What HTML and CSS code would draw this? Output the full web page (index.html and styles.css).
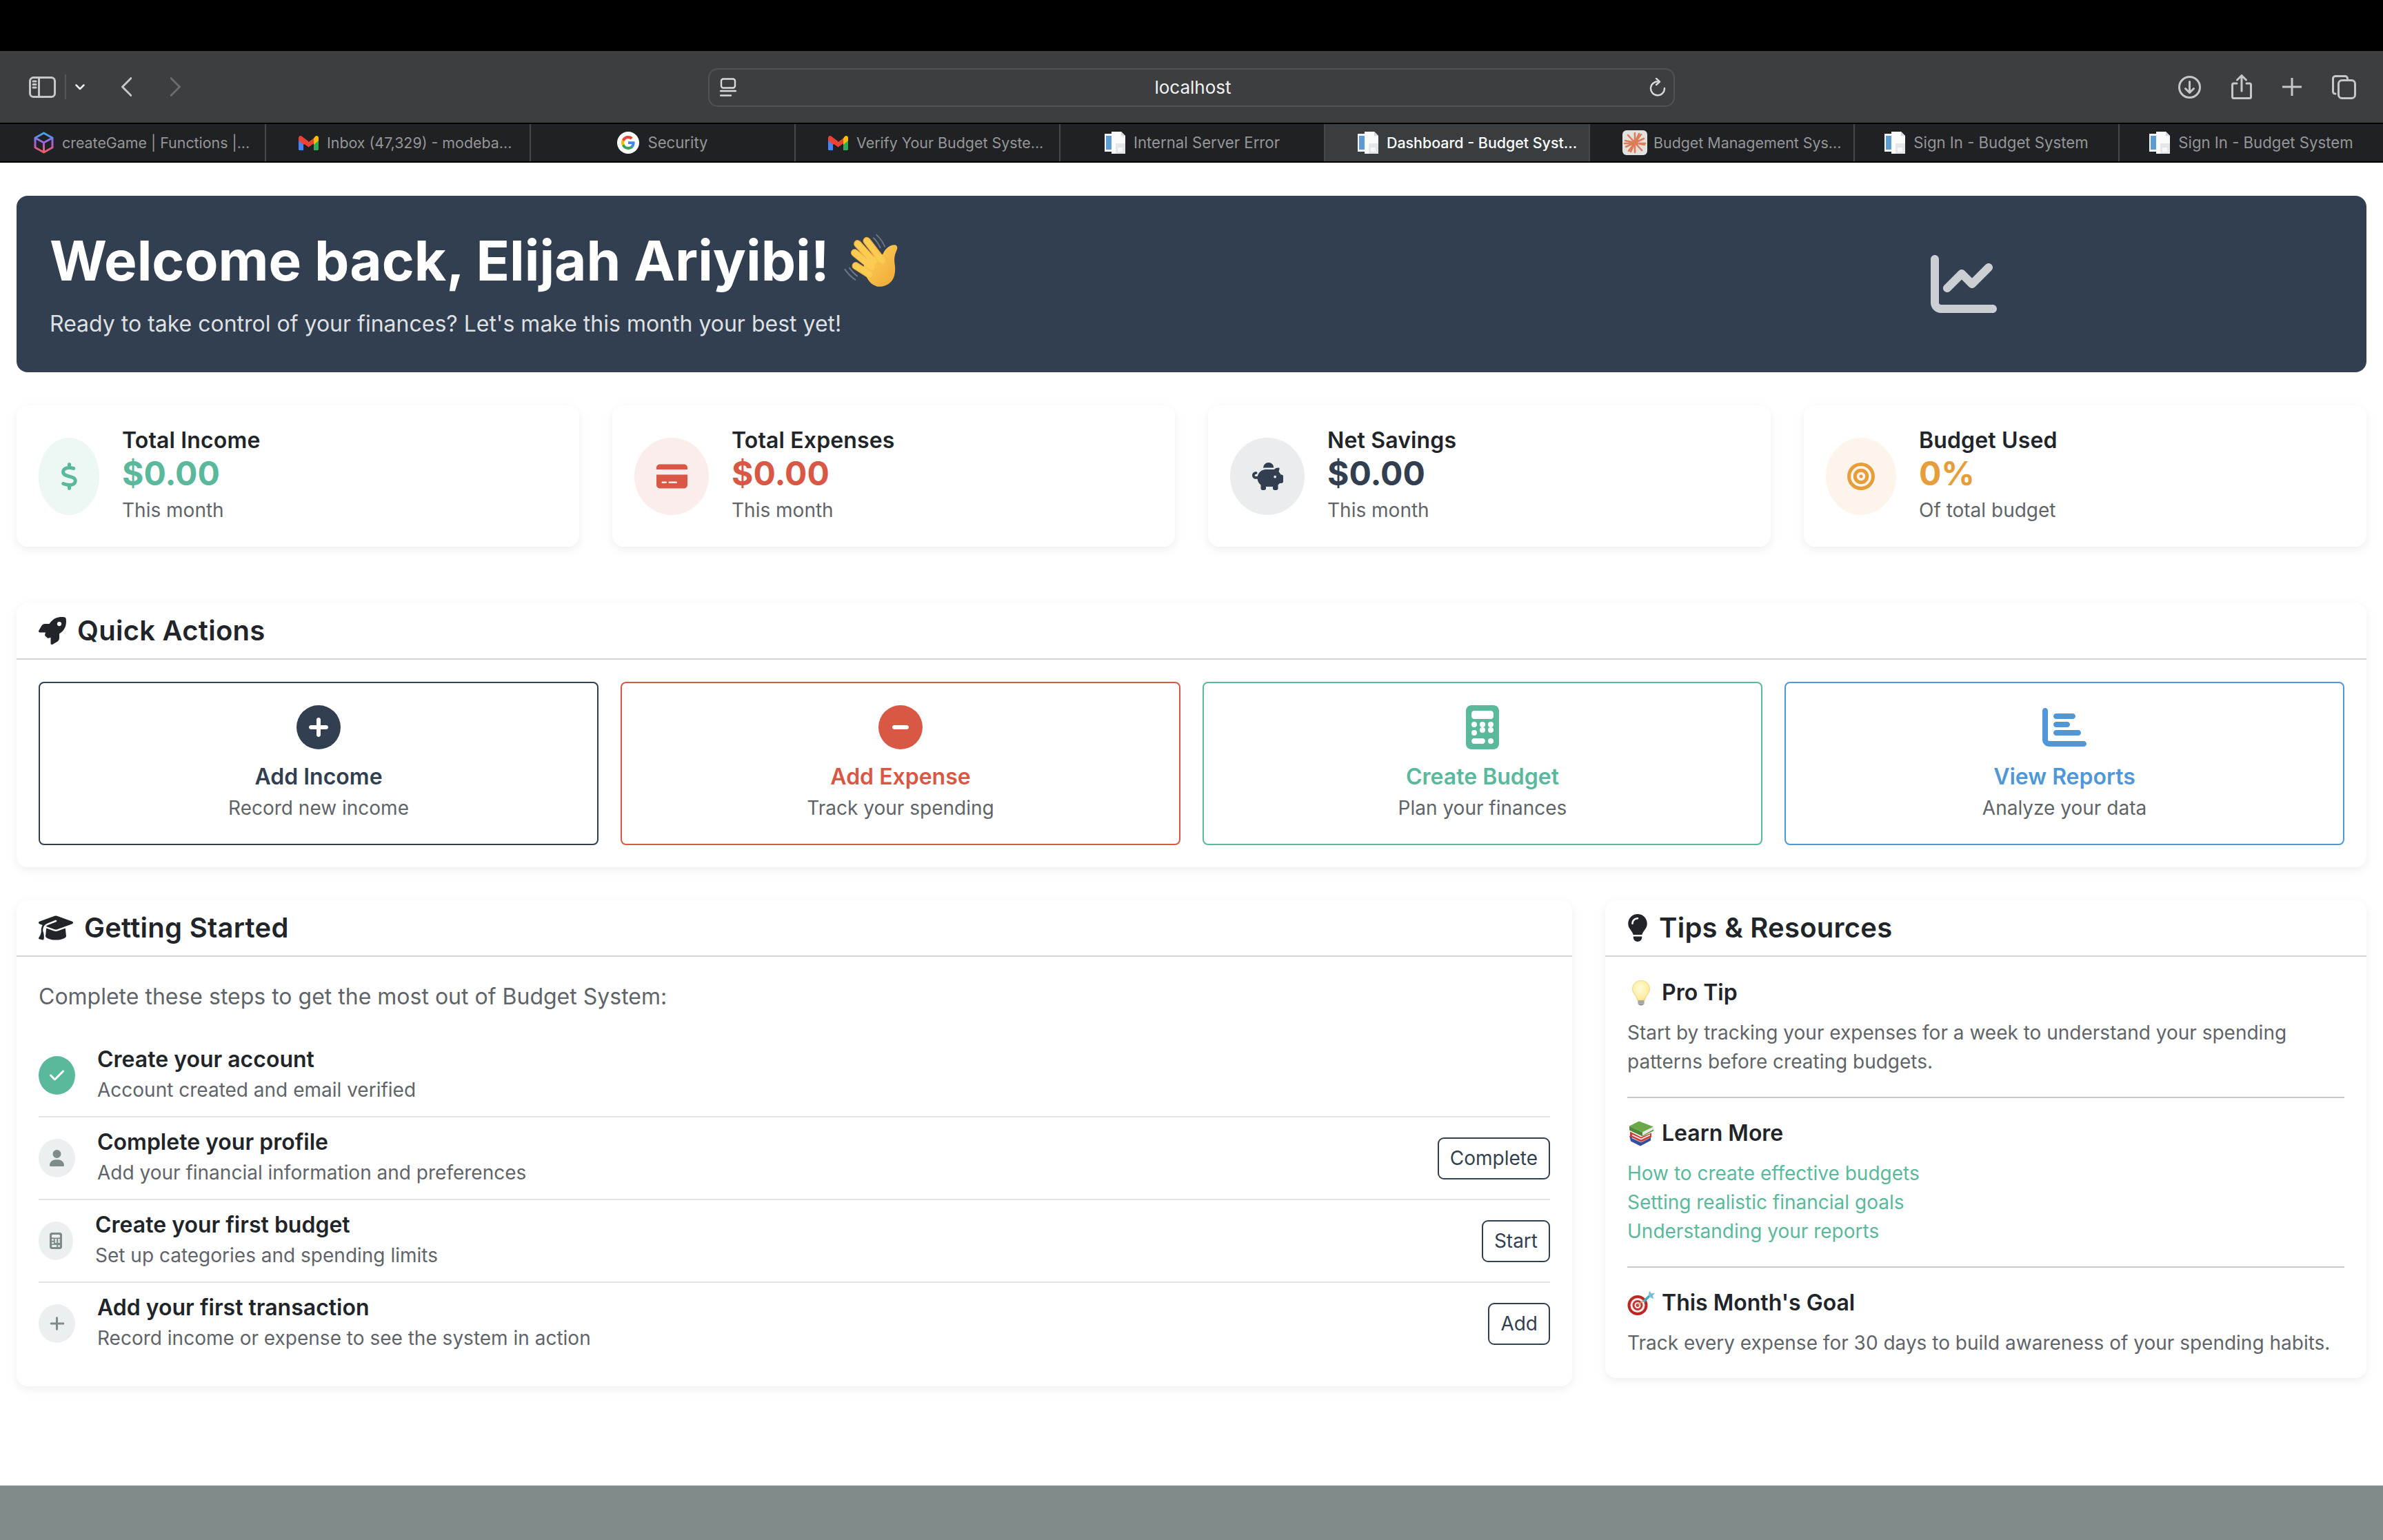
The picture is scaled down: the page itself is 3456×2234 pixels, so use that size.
FILE: index.html
```html
<!DOCTYPE html>
<html lang="en">
<head>
  <meta charset="UTF-8">
  <title>Dashboard - Budget System</title>
  <link rel="stylesheet" href="styles.css">
</head>
<body>
  <svg class="sprite" xmlns="http://www.w3.org/2000/svg">
    <defs>
      <linearGradient id="cubeGrad" x1="0" y1="0" x2="0" y2="1">
        <stop offset="0" stop-color="#3fa9e8"/>
        <stop offset="0.5" stop-color="#a45de0"/>
        <stop offset="1" stop-color="#f0605a"/>
      </linearGradient>
      <linearGradient id="palmGrad" x1="0" y1="0" x2="1" y2="1">
        <stop offset="0" stop-color="#fcd45c"/>
        <stop offset="1" stop-color="#f0a735"/>
      </linearGradient>
      <radialGradient id="bulbGrad" cx="0.45" cy="0.4" r="0.7">
        <stop offset="0" stop-color="#fffbdc"/>
        <stop offset="0.7" stop-color="#fbeea0"/>
        <stop offset="1" stop-color="#eccd62"/>
      </radialGradient>
    </defs>
    <symbol id="i-chart-line" viewBox="0 0 512 512"><path d="M64 64c0-17.7-14.3-32-32-32S0 46.3 0 64V400c0 44.2 35.8 80 80 80H480c17.7 0 32-14.3 32-32s-14.3-32-32-32H80c-8.8 0-16-7.2-16-16V64zm406.6 86.6c12.5-12.5 12.5-32.8 0-45.3s-32.8-12.5-45.3 0L320 210.7l-57.4-57.4c-12.5-12.5-32.8-12.5-45.3 0l-112 112c-12.5 12.5-12.5 32.8 0 45.3s32.8 12.5 45.3 0L240 221.3l57.4 57.4c12.5 12.5 32.8 12.5 45.3 0l128-128z"/></symbol>
    <symbol id="i-dollar" viewBox="0 0 320 512"><path d="M160 0c17.7 0 32 14.3 32 32V67.7c1.6 .2 3.1 .4 4.7 .7c.4 .1 .7 .1 1.1 .2l48 8.8c17.4 3.2 28.9 19.9 25.7 37.2s-19.9 28.9-37.2 25.7l-47.5-8.7c-31.3-4.6-58.9-1.5-78.3 6.2s-27.2 18.3-29 28.1c-2 10.7-.5 16.7 1.2 20.4c1.8 3.9 5.5 8.3 12.8 13.2c16.3 10.7 41.3 17.7 73.7 26.3l2.9 .8c28.6 7.6 63.6 16.8 89.6 33.8c14.2 9.3 27.6 21.9 35.9 39.5c8.5 17.9 10.3 37.9 6.4 59.2c-6.9 38-33.1 63.4-65.6 76.7c-13.7 5.6-28.6 9.2-44.4 11V480c0 17.7-14.3 32-32 32s-32-14.3-32-32V445.1c-.4-.1-.9-.1-1.3-.2l-.2 0 0 0c-24.4-3.8-64.5-14.3-91.5-26.3c-16.1-7.2-23.4-26.1-16.2-42.2s26.1-23.4 42.2-16.2c20.9 9.3 55.3 18.5 75.2 21.6c31.9 4.7 58.2 2 76-5.3c16.9-6.9 24.6-16.9 26.8-28.9c1.9-10.6 .4-16.7-1.3-20.4c-1.9-4-5.6-8.4-13-13.3c-16.4-10.7-41.5-17.7-74-26.3l-2.8-.7 0 0C119.4 279.3 84.4 270 58.4 253c-14.2-9.3-27.5-22-35.8-39.6c-8.4-17.9-10.1-37.9-6.1-59.2C23.7 116 52.3 91.2 84.8 78.3c13.3-5.3 27.9-8.9 43.2-11V32c0-17.7 14.3-32 32-32z"/></symbol>
    <symbol id="i-card" viewBox="0 0 576 512"><path d="M64 32C28.7 32 0 60.7 0 96v32H576V96c0-35.3-28.7-64-64-64H64zM576 224H0V416c0 35.3 28.7 64 64 64H512c35.3 0 64-28.7 64-64V224zM112 352h64c8.8 0 16 7.2 16 16s-7.2 16-16 16H112c-8.8 0-16-7.2-16-16s7.2-16 16-16zm112 16c0-8.8 7.2-16 16-16H368c8.8 0 16 7.2 16 16s-7.2 16-16 16H240c-8.8 0-16-7.2-16-16z"/></symbol>
    <symbol id="i-piggy" viewBox="0 0 576 512"><path d="M400 96l0 .7c-5.3-.4-10.6-.7-16-.7H256c-16.5 0-32.5 2.1-47.8 6c-.1-2-.2-4-.2-6c0-53 43-96 96-96s96 43 96 96zm-16 32c3.5 0 7 .1 10.4 .3c4.2 .3 8.4 .7 12.6 1.3C424.6 109.1 450.8 96 480 96h11.5c10.4 0 18 9.8 15.5 19.9l-13.8 55.2c15.8 14.8 28.7 32.8 37.5 52.9H544c17.7 0 32 14.3 32 32v96c0 17.7-14.3 32-32 32H512c-9.1 12.1-19.9 22.9-32 32v64c0 17.7-14.3 32-32 32H416c-17.7 0-32-14.3-32-32V448H256v32c0 17.7-14.3 32-32 32H192c-17.7 0-32-14.3-32-32V416c-34.9-26.2-58.7-66.3-63.2-112H68c-37.6 0-68-30.4-68-68s30.4-68 68-68h4c13.3 0 24 10.7 24 24s-10.7 24-24 24H68c-11 0-20 9-20 20s9 20 20 20H99.2c12.1-59.8 57.7-107.5 116.3-122.8c12.9-3.4 26.5-5.2 40.5-5.2H384zm64 136a24 24 0 1 0 -48 0 24 24 0 1 0 48 0z"/></symbol>
    <symbol id="i-bullseye" viewBox="0 0 512 512"><path d="M448 256A192 192 0 1 0 64 256a192 192 0 1 0 384 0zM0 256a256 256 0 1 1 512 0A256 256 0 1 1 0 256zm256 80a80 80 0 1 0 0-160 80 80 0 1 0 0 160zm0-224a144 144 0 1 1 0 288 144 144 0 1 1 0-288zM224 256a32 32 0 1 1 64 0 32 32 0 1 1 -64 0z"/></symbol>
    <symbol id="i-rocket" viewBox="0 0 512 512"><path d="M156.6 384.9L125.7 354c-8.5-8.5-11.5-20.8-7.7-32.2c3-8.9 7-20.5 11.8-33.8L24 288c-8.6 0-16.6-4.6-20.9-12.1s-4.2-16.7 .2-24.1l52.5-88.5c13-21.9 36.5-35.3 61.9-35.3l82.3 0c2.4-4 4.8-7.7 7.2-11.3C289.1-4.1 411.1-8.1 483.9 5.3c11.6 2.1 20.6 11.2 22.8 22.8c13.4 72.9 9.3 194.8-111.4 276.7c-3.5 2.4-7.3 4.8-11.3 7.2v82.3c0 25.4-13.4 49-35.3 61.9l-88.5 52.5c-7.4 4.4-16.6 4.5-24.1 .2s-12.1-12.2-12.1-20.9V380.8c-14.1 4.9-26.4 8.9-35.7 11.9c-11.2 3.6-23.4 .5-31.8-7.8zM384 168a40 40 0 1 0 0-80 40 40 0 1 0 0 80z"/></symbol>
    <symbol id="i-plus-circle" viewBox="0 0 512 512"><path d="M256 512A256 256 0 1 0 256 0a256 256 0 1 0 0 512zM232 344V280H168c-13.3 0-24-10.7-24-24s10.7-24 24-24h64V168c0-13.3 10.7-24 24-24s24 10.7 24 24v64h64c13.3 0 24 10.7 24 24s-10.7 24-24 24H280v64c0 13.3-10.7 24-24 24s-24-10.7-24-24z"/></symbol>
    <symbol id="i-minus-circle" viewBox="0 0 512 512"><path d="M256 512A256 256 0 1 0 256 0a256 256 0 1 0 0 512zM184 232H328c13.3 0 24 10.7 24 24s-10.7 24-24 24H184c-13.3 0-24-10.7-24-24s10.7-24 24-24z"/></symbol>
    <symbol id="i-calculator" viewBox="0 0 384 512"><path d="M64 0C28.7 0 0 28.7 0 64V448c0 35.3 28.7 64 64 64H320c35.3 0 64-28.7 64-64V64c0-35.3-28.7-64-64-64H64zM96 64H288c17.7 0 32 14.3 32 32v32c0 17.7-14.3 32-32 32H96c-17.7 0-32-14.3-32-32V96c0-17.7 14.3-32 32-32zm32 160a32 32 0 1 1 -64 0 32 32 0 1 1 64 0zM96 352a32 32 0 1 1 0-64 32 32 0 1 1 0 64zM64 416c0-17.7 14.3-32 32-32h96c17.7 0 32 14.3 32 32s-14.3 32-32 32H96c-17.7 0-32-14.3-32-32zM192 256a32 32 0 1 1 0-64 32 32 0 1 1 0 64zm32 32a32 32 0 1 1 -64 0 32 32 0 1 1 64 0zm64-32a32 32 0 1 1 0-64 32 32 0 1 1 0 64zm32 32a32 32 0 1 1 -64 0 32 32 0 1 1 64 0zM288 448a32 32 0 1 1 0-64 32 32 0 1 1 0 64z"/></symbol>
    <symbol id="i-chart-bar" viewBox="0 0 512 512"><path d="M32 32c17.7 0 32 14.3 32 32V400c0 8.8 7.2 16 16 16H480c17.7 0 32 14.3 32 32s-14.3 32-32 32H80c-44.2 0-80-35.8-80-80V64C0 46.3 14.3 32 32 32zm96 96c0-17.7 14.3-32 32-32l192 0c17.7 0 32 14.3 32 32s-14.3 32-32 32l-192 0c-17.7 0-32-14.3-32-32zm32 64H288c17.7 0 32 14.3 32 32s-14.3 32-32 32H160c-17.7 0-32-14.3-32-32s14.3-32 32-32zm0 96H416c17.7 0 32 14.3 32 32s-14.3 32-32 32H160c-17.7 0-32-14.3-32-32s14.3-32 32-32z"/></symbol>
    <symbol id="i-cap" viewBox="0 0 640 512"><path d="M320 32c-8.1 0-16.1 1.4-23.7 4.1L15.8 137.4C6.3 140.9 0 149.9 0 160s6.3 19.1 15.8 22.6l57.9 20.9C57.3 229.3 48 259.8 48 291.9v28.1c0 28.4-10.8 57.7-22.3 80.8c-6.5 13-13.9 25.8-22.5 37.6C0 442.7-.9 448.3 .9 453.4s6 8.9 11.2 10.2l64 16c4.2 1.1 8.7 .3 12.4-2s6.3-6.1 7.1-10.4c8.6-42.8 4.3-81.2-2.1-108.7C90.3 344.3 86 329.8 80 316.5V291.9c0-30.2 10.2-58.7 27.9-81.5c12.9-15.5 29.6-28 49.2-35.7l157-61.7c8.2-3.2 17.5 .8 20.7 9s-.8 17.5-9 20.7l-157 61.7c-12.4 4.9-23.3 12.4-32.2 21.6l159.6 57.6c7.6 2.7 15.6 4.1 23.7 4.1s16.1-1.4 23.7-4.1L624.2 182.6c9.5-3.4 15.8-12.5 15.8-22.6s-6.3-19.1-15.8-22.6L343.7 36.1C336.1 33.4 328.1 32 320 32zM128 408c0 35.3 86 72 192 72s192-36.7 192-72L496.7 262.6 354.5 314c-11.1 4-22.8 6-34.5 6s-23.5-2-34.5-6L143.3 262.6 128 408z"/></symbol>
    <symbol id="i-bulb" viewBox="0 0 384 512"><path d="M272 384c9.6-31.9 29.5-59.1 49.2-86.2c5.2-7.1 10.4-14.2 15.4-21.4c19.8-28.5 31.4-63 31.4-100.3C368 78.8 289.2 0 192 0S16 78.8 16 176c0 37.3 11.6 71.9 31.4 100.3c5 7.2 10.2 14.3 15.4 21.4c19.8 27.1 39.7 54.4 49.2 86.2H272zM192 512c44.2 0 80-35.8 80-80V416H112v16c0 44.2 35.8 80 80 80zM112 176c0 8.8-7.2 16-16 16s-16-7.2-16-16c0-61.9 50.1-112 112-112c8.8 0 16 7.2 16 16s-7.2 16-16 16c-44.2 0-80 35.8-80 80z"/></symbol>
    <symbol id="i-user" viewBox="0 0 448 512"><path d="M224 256A128 128 0 1 0 224 0a128 128 0 1 0 0 256zm-45.7 48C79.8 304 0 383.8 0 482.3C0 498.7 13.3 512 29.7 512H418.3c16.4 0 29.7-13.3 29.7-29.7C448 383.8 368.2 304 269.7 304H178.3z"/></symbol>
    <symbol id="i-check" viewBox="0 0 448 512"><path d="M438.6 105.4c12.5 12.5 12.5 32.8 0 45.3l-256 256c-12.5 12.5-32.8 12.5-45.3 0l-128-128c-12.5-12.5-12.5-32.8 0-45.3s32.8-12.5 45.3 0L160 338.7 393.4 105.4c12.5-12.5 32.8-12.5 45.3 0z"/></symbol>
    <symbol id="i-plus" viewBox="0 0 448 512"><path d="M256 80c0-17.7-14.3-32-32-32s-32 14.3-32 32V224H48c-17.7 0-32 14.3-32 32s14.3 32 32 32H192V432c0 17.7 14.3 32 32 32s32-14.3 32-32V288H432c17.7 0 32-14.3 32-32s-14.3-32-32-32H256V80z"/></symbol>

    <symbol id="fav-cube" viewBox="0 0 29 32"><path d="M14.5 2 27 9v14l-12.500 7L2 23V9zM2 9l12.500 7L27 9M14.500 16v14" fill="none" stroke="url(#cubeGrad)" stroke-width="3" stroke-linejoin="round"/></symbol>
    <symbol id="fav-gmail" viewBox="0 0 29 21">
      <path d="M0 3v16.500c0 .8.700 1.500 1.500 1.500H7V9z" fill="#4285f4"/>
      <path d="M22 9v12h5.500c.8 0 1.500-.7 1.500-1.500V3z" fill="#34a853"/>
      <path d="M0 3c0-2.500 2.800-3.800 4.700-2.300L14.500 8 7 13 0 7z" fill="#ea4335"/>
      <path d="M7 3.500 14.500 9 22 3.500V11l-7.500 5.500L7 11z" fill="#ea4335"/>
      <path d="M22 3.500 24.300.7C26.200-.8 29 .5 29 3v4l-7 6z" fill="#fbbc04"/>
    </symbol>
    <symbol id="fav-google" viewBox="0 0 32 32">
      <circle cx="16" cy="16" r="16" fill="#fff"/>
      <path d="M25.600 16.200c0-.7-.1-1.300-.2-1.900H16v3.600h5.400a4.600 4.600 0 0 1-2 3v2.500h3.200c1.900-1.700 3-4.300 3-7.200z" fill="#4285f4"/>
      <path d="M16 26c2.700 0 5-.9 6.600-2.400l-3.200-2.500c-.9.600-2 1-3.400 1-2.600 0-4.800-1.800-5.600-4.100H7.100v2.600A10 10 0 0 0 16 26z" fill="#34a853"/>
      <path d="M10.400 18c-.2-.6-.3-1.300-.3-2s.1-1.400.3-2v-2.600H7.100a10 10 0 0 0 0 9.200z" fill="#fbbc05"/>
      <path d="M16 9.900c1.500 0 2.800.5 3.800 1.500l2.900-2.900A10 10 0 0 0 7.100 11.400l3.300 2.600c.8-2.300 3-4.100 5.600-4.100z" fill="#ea4335"/>
    </symbol>
    <symbol id="fav-doc" viewBox="0 0 30 32">
      <path d="M0 3h21v26H0z" fill="#f4f6f8"/>
      <path d="M2 6h8v20H2z" fill="#5d9bd3"/>
      <path d="M10 0h14l6 6v26H10z" fill="#fbfbfc"/>
      <path d="M24 0l6 6h-6z" fill="#d5d8dc"/>
      <path d="M16 17h14v15H16z" fill="#e4e6e9"/>
      <path d="M19 23h7v6h-7z" fill="#f7f7f8"/>
    </symbol>
    <symbol id="fav-star" viewBox="0 0 36 36">
      <rect width="36" height="36" rx="6" fill="#e4e2de"/>
      <path d="M18 4v28M8 7l20 22M4 15l28 6M5 24l26-12M12 31l12-26M27 6 9 30M3 19h30" stroke="#dd7c58" stroke-width="2.600" stroke-linecap="round" fill="none"/>
    </symbol>

    <symbol id="emoji-hand" viewBox="60 50 250 245">
      <path d="M70 212c12 18 28 34 46 46M90 205c9 14 20 26 34 36M210 58c15 14 28 32 37 52M197 72c12 11 22 26 30 43" fill="none" stroke="#6d7680" stroke-width="6" stroke-linecap="round"/>
      <g fill="none" stroke="#eda93a" stroke-width="34" stroke-linecap="round">
        <path d="M126 98l72 80M167 85l68 88M113 138l76 62M118 196l60 38"/>
      </g>
      <path d="M150 205c10-30 40-55 88-60 8-20 24-40 50-42 16 0 17 14 11 25-8 18-12 34-8 60 8 52-10 92-55 99-38 6-66-14-86-82z" fill="url(#palmGrad)"/>
      <g fill="none" stroke="#fbcb52" stroke-width="27" stroke-linecap="round">
        <path d="M126 98l72 80M167 85l68 88M113 138l76 62M118 196l60 38"/>
      </g>
    </symbol>
    <symbol id="emoji-bulb" viewBox="0 0 40 37">
      <path d="M20 0.500C12.500.5 7.500 6 7.500 12.500c0 6.500 6 10 7.500 17h10c1.500-7 7.500-10.500 7.500-17C32.500 6 27.500.5 20 .5z" fill="url(#bulbGrad)" stroke="#e6cd72" stroke-width=".8"/>
      <path d="M15.500 29.500h9v5l-3 2h-3l-3-2z" fill="#8f9498"/>
      <path d="M15.500 31.500h9M15.500 33.500h9" stroke="#c8cbcd" stroke-width=".8"/>
    </symbol>
    <symbol id="emoji-books" viewBox="0 0 40 36">
      <path d="M3 21l17 9 14-7v5l-15 8-14-7z" fill="#33509e"/>
      <path d="M7 24l13 6 12-6" fill="none" stroke="#d7d9df" stroke-width="1.500"/>
      <path d="M4 15l16 8 15-6v6l-15 7-16-8z" fill="#cf3a2c"/>
      <path d="M7 19l13 6 13-6v2l-13 6-13-6z" fill="#ececec"/>
      <path d="M3 7l14-7 21 8-16 8z" fill="#6aa84a"/>
      <path d="M3 7l19 9v6L3 13z" fill="#4d8c36"/>
      <path d="M22 16l16-8v4l-16 9z" fill="#e8e8e0"/>
      <path d="M22 21l16-9v2l-16 8z" fill="#4d8c36"/>
    </symbol>
    <symbol id="emoji-dart" viewBox="0 0 40 36">
      <circle cx="15" cy="21" r="14.500" fill="#bf2623"/>
      <circle cx="15" cy="21" r="10.500" fill="#f3efee"/>
      <circle cx="15" cy="21" r="7.500" fill="#c83330"/>
      <circle cx="15" cy="21" r="4.500" fill="#f3efee"/>
      <circle cx="15" cy="21" r="2.400" fill="#c83330"/>
      <path d="M15 21 31 8" stroke="#d6a84a" stroke-width="1.600"/>
      <path d="M22 15l9-9 2 3-8 8z" fill="#48a8c8"/>
      <path d="M31 6l1-6 3 4 5-1-3 4 1 5-5-3z" fill="#6fc0d8"/>
    </symbol>
  </svg>

  <div class="topbar"></div>

  <div class="toolbar">
    <div class="toolbar-left">
      <svg class="tb-sidebar" viewBox="0 0 39 31"><rect x="1.500" y="1.500" width="36" height="28" rx="5"/><path d="M14.500 2v27M6 7h4M6 11.500h4M6 16h4"/></svg>
      <span class="tb-sep"></span>
      <svg class="tb-chevron" viewBox="0 0 14 9"><path d="M1.500 1.500 7 7l5.500-5.500"/></svg>
      <svg class="tb-back" viewBox="0 0 15 28"><path d="M14 1.500 1.500 14 14 26.500"/></svg>
      <svg class="tb-fwd" viewBox="0 0 15 28"><path d="M1 1.500 13.500 14 1 26.500"/></svg>
    </div>
    <div class="urlbar">
      <svg class="url-icon" viewBox="0 0 24 27"><rect x="2" y="1.500" width="20" height="13" rx="3"/><path d="M1 19h22M1 25.500h15"/></svg>
      <span class="url-text">localhost</span>
      <svg class="url-icon" viewBox="0 0 24 27"><path d="M14 5.500A10 10 0 1 0 22 15M10 .8l5 4.700-5 4.500"/></svg>
    </div>
    <div class="toolbar-right">
      <svg class="tb-download" viewBox="0 0 33 33"><circle cx="16.500" cy="16.500" r="15"/><path d="M16.500 8.500v16M10.500 18.500l6 6 6-6"/></svg>
      <svg class="tb-share" viewBox="0 0 30 36"><path d="M8 13H3.500a2 2 0 0 0-2 2v17.500a2 2 0 0 0 2 2h23a2 2 0 0 0 2-2V15a2 2 0 0 0-2-2H22M15 24V1.500M8.500 8 15 1.500 21.500 8"/></svg>
      <svg class="tb-plus" viewBox="0 0 28 26"><path d="M14 0v26M0 13h28"/></svg>
      <svg class="tb-tabs" viewBox="0 0 35 35"><rect x="9.500" y="7.500" width="24" height="26" rx="5"/><path d="M5 27h-.5a3 3 0 0 1-3-3V5a3.500 3.500 0 0 1 3.500-3.500h14A3.500 3.500 0 0 1 22.500 5"/></svg>
    </div>
  </div>

  <div class="tabs">
    <div class="tab tab-long"><svg class="fav fav-cube"><use href="#fav-cube"/></svg><span>createGame | Functions |...</span></div>
    <div class="tab tab-long"><svg class="fav fav-gmail"><use href="#fav-gmail"/></svg><span>Inbox (47,329) - modeba...</span></div>
    <div class="tab"><svg class="fav fav-google"><use href="#fav-google"/></svg><span>Security</span></div>
    <div class="tab tab-long"><svg class="fav fav-gmail"><use href="#fav-gmail"/></svg><span>Verify Your Budget Syste...</span></div>
    <div class="tab"><svg class="fav fav-doc"><use href="#fav-doc"/></svg><span>Internal Server Error</span></div>
    <div class="tab tab-long active"><svg class="fav fav-doc"><use href="#fav-doc"/></svg><span>Dashboard - Budget Syst...</span></div>
    <div class="tab tab-long"><svg class="fav fav-star"><use href="#fav-star"/></svg><span>Budget Management Sys...</span></div>
    <div class="tab"><svg class="fav fav-doc"><use href="#fav-doc"/></svg><span>Sign In - Budget System</span></div>
    <div class="tab"><svg class="fav fav-doc"><use href="#fav-doc"/></svg><span>Sign In - Budget System</span></div>
  </div>

  <main class="page">
    <section class="hero">
      <div class="hero-text">
        <h1>Welcome back, Elijah Ariyibi! <svg class="hand"><use href="#emoji-hand"/></svg></h1>
        <p>Ready to take control of your finances? Let's make this month your best yet!</p>
      </div>
      <div class="hero-side">
        <svg class="ico hero-icon"><use href="#i-chart-line"/></svg>
      </div>
    </section>

    <section class="stats">
      <div class="card stat">
        <div class="stat-icon tint-green w-88"><svg class="ico sz-dollar"><use href="#i-dollar"/></svg></div>
        <div>
          <div class="stat-title">Total Income</div>
          <div class="stat-value c-green">$0.00</div>
          <div class="stat-sub">This month</div>
        </div>
      </div>
      <div class="card stat">
        <div class="stat-icon tint-red w-108"><svg class="ico sz-card"><use href="#i-card"/></svg></div>
        <div>
          <div class="stat-title">Total Expenses</div>
          <div class="stat-value c-red">$0.00</div>
          <div class="stat-sub">This month</div>
        </div>
      </div>
      <div class="card stat">
        <div class="stat-icon tint-navy w-108"><svg class="ico sz-card"><use href="#i-piggy"/></svg></div>
        <div>
          <div class="stat-title">Net Savings</div>
          <div class="stat-value c-navy">$0.00</div>
          <div class="stat-sub">This month</div>
        </div>
      </div>
      <div class="card stat">
        <div class="stat-icon tint-orange w-102"><svg class="ico sz-round"><use href="#i-bullseye"/></svg></div>
        <div>
          <div class="stat-title">Budget Used</div>
          <div class="stat-value c-orange">0%</div>
          <div class="stat-sub">Of total budget</div>
        </div>
      </div>
    </section>

    <section class="card quick">
      <h2 class="card-head"><svg class="ico head-rocket"><use href="#i-rocket"/></svg>Quick Actions</h2>
      <div class="actions">
        <a class="action b-navy">
          <svg class="ico act-round c-navy"><use href="#i-plus-circle"/></svg>
          <div class="action-title c-navy">Add Income</div>
          <div class="action-sub">Record new income</div>
        </a>
        <a class="action b-red">
          <svg class="ico act-round c-red"><use href="#i-minus-circle"/></svg>
          <div class="action-title c-red">Add Expense</div>
          <div class="action-sub">Track your spending</div>
        </a>
        <a class="action b-green">
          <svg class="ico act-calc c-green"><use href="#i-calculator"/></svg>
          <div class="action-title c-green">Create Budget</div>
          <div class="action-sub">Plan your finances</div>
        </a>
        <a class="action b-blue">
          <svg class="ico act-round c-blue"><use href="#i-chart-bar"/></svg>
          <div class="action-title c-blue">View Reports</div>
          <div class="action-sub">Analyze your data</div>
        </a>
      </div>
    </section>

    <div class="lower">
      <section class="card started">
        <h2 class="card-head"><svg class="ico head-cap"><use href="#i-cap"/></svg>Getting Started</h2>
        <div class="started-body">
          <p class="intro">Complete these steps to get the most out of Budget System:</p>
          <div class="step">
            <div class="step-icon done"><svg class="ico sz-check"><use href="#i-check"/></svg></div>
            <div class="step-text">
              <div class="step-title">Create your account</div>
              <div class="step-sub">Account created and email verified</div>
            </div>
          </div>
          <div class="step">
            <div class="step-icon"><svg class="ico sz-user"><use href="#i-user"/></svg></div>
            <div class="step-text">
              <div class="step-title">Complete your profile</div>
              <div class="step-sub">Add your financial information and preferences</div>
            </div>
            <a class="btn">Complete</a>
          </div>
          <div class="step">
            <div class="step-icon narrow"><svg class="ico sz-calc"><use href="#i-calculator"/></svg></div>
            <div class="step-text">
              <div class="step-title">Create your first budget</div>
              <div class="step-sub">Set up categories and spending limits</div>
            </div>
            <a class="btn">Start</a>
          </div>
          <div class="step">
            <div class="step-icon"><svg class="ico sz-user"><use href="#i-plus"/></svg></div>
            <div class="step-text">
              <div class="step-title">Add your first transaction</div>
              <div class="step-sub">Record income or expense to see the system in action</div>
            </div>
            <a class="btn">Add</a>
          </div>
        </div>
      </section>

      <section class="card tips">
        <h2 class="card-head"><svg class="ico head-bulb"><use href="#i-bulb"/></svg>Tips &amp; Resources</h2>
        <div class="tips-body">
          <div class="tip">
            <h3><svg class="emoji"><use href="#emoji-bulb"/></svg>Pro Tip</h3>
            <p>Start by tracking your expenses for a week to understand your spending patterns before creating budgets.</p>
          </div>
          <div class="tip">
            <h3><svg class="emoji"><use href="#emoji-books"/></svg>Learn More</h3>
            <ul class="links">
              <li><a>How to create effective budgets</a></li>
              <li><a>Setting realistic financial goals</a></li>
              <li><a>Understanding your reports</a></li>
            </ul>
          </div>
          <div class="tip last">
            <h3><svg class="emoji"><use href="#emoji-dart"/></svg>This Month's Goal</h3>
            <p>Track every expense for 30 days to build awareness of your spending habits.</p>
          </div>
        </div>
      </section>
    </div>
  </main>

  <div class="bottom-band"></div>
</body>
</html>
```

FILE: styles.css
```css
* {
  box-sizing: border-box;
}

html, body {
  height: 100%;
}

body {
  margin: 0;
  display: flex;
  flex-direction: column;
  height: 2234px;
  background: #fff;
  color: #212529;
  font-family: Inter, "Liberation Sans", sans-serif;
  font-size: 28px;
  line-height: 42px;
}

h1, h2, h3, p, ul {
  margin: 0;
  padding: 0;
}

.sprite {
  display: block;
  width: 0;
  height: 0;
}

.ico {
  display: block;
  fill: currentColor;
  flex-shrink: 0;
}

/* browser chrome */
.topbar {
  height: 74px;
  background: #000;
}

.toolbar {
  height: 104px;
  background: #3c3e40;
  display: grid;
  grid-template-columns: 1fr 1402px 1fr;
  align-items: center;
}

.toolbar svg {
  display: block;
  fill: none;
  stroke: #c5c7c8;
  stroke-width: 3;
  stroke-linecap: round;
  stroke-linejoin: round;
}

.toolbar-left {
  display: flex;
  align-items: center;
  padding-left: 42px;
}

.tb-sidebar { width: 39px; height: 31px; }
.tb-sep { width: 2px; height: 36px; background: #55585a; margin-left: 13px; }
.tb-chevron { width: 14px; height: 9px; margin-left: 13px; stroke: #eee !important; stroke-width: 2.500 !important; }
.tb-back { width: 15px; height: 28px; margin-left: 53px; }
.tb-fwd { width: 15px; height: 28px; margin-left: 56px; stroke: #6a6c6e !important; }

.urlbar {
  height: 56px;
  margin-top: 1px;
  border: 2px solid #505355;
  border-radius: 14px;
  display: flex;
  align-items: center;
  padding: 0 11px 0 15px;
}

.url-icon { width: 24px; height: 27px; }
.urlbar svg { stroke: #d8d9da; stroke-width: 2.400; }

.url-text {
  flex: 1;
  text-align: center;
  color: #f2f2f2;
  font-size: 26px;
  line-height: 32px;
}

.toolbar-right {
  display: flex;
  align-items: center;
  justify-content: flex-end;
  gap: 44px;
  padding-right: 39px;
}

.tb-download { width: 33px; height: 33px; }
.tb-share { width: 30px; height: 36px; }
.tb-plus { width: 28px; height: 26px; }
.tb-tabs { width: 35px; height: 35px; }

.tabs {
  height: 58px;
  display: grid;
  grid-template-columns: repeat(9, 1fr);
  background: #202124;
  border-top: 2px solid #000;
  border-bottom: 2px solid #000;
  box-shadow: 0 2px 6px rgba(0, 0, 0, 0.1);
  color: #959697;
  font-size: 22.200px;
  line-height: 28px;
}

.tab {
  display: flex;
  align-items: center;
  justify-content: center;
  gap: 12px;
  border-left: 2px solid #45474a;
  white-space: nowrap;
  overflow: hidden;
}

.tab:first-child {
  border-left: 0;
}

.tab-long {
  justify-content: flex-start;
  font-size: 21.400px;
  padding-left: 47px;
}

.tab-long:first-child {
  padding-left: 49px;
}

.tab.active {
  background: #3a3d3f;
  color: #fff;
  font-weight: 500;
}

.fav { flex-shrink: 0; }
.fav-cube { width: 29px; height: 32px; }
.fav-gmail { width: 29px; height: 21px; }
.fav-google { width: 32px; height: 32px; }
.fav-doc { width: 30px; height: 32px; }
.fav-star { width: 36px; height: 36px; margin-right: -3px; }

/* page */
.page {
  flex: 1;
  padding: 48px 24px 0;
  background: #fff;
}

.bottom-band {
  height: 79px;
  background: #7f8a8a;
}

.hero {
  height: 256px;
  background: #323f50;
  border-radius: 16px;
  color: #fff;
  display: flex;
  align-items: center;
  padding-left: 48px;
}

.hero-text {
  flex: 1;
}

.hero h1 {
  display: flex;
  align-items: center;
  font-size: 80px;
  line-height: 96px;
  font-weight: 700;
  white-space: pre;
}

.hand {
  width: 82px;
  height: 80px;
}

.hero p {
  margin-top: 20px;
  font-size: 32px;
  line-height: 48px;
  color: rgba(255, 255, 255, 0.85);
}

.hero-side {
  width: 1168px;
  display: flex;
  justify-content: center;
}

.hero-icon {
  width: 96px;
  height: 96px;
  color: rgba(255, 255, 255, 0.75);
}

.card {
  background: #fff;
  border-radius: 16px;
  box-shadow: 0 4px 14px rgba(0, 0, 0, 0.07);
}

.stats {
  display: grid;
  grid-template-columns: repeat(4, 1fr);
  gap: 48px;
  margin-top: 48px;
}

.stat {
  display: flex;
  align-items: center;
  gap: 33px;
  padding: 32px;
}

.stat-icon {
  height: 112px;
  border-radius: 50%;
  display: flex;
  align-items: center;
  justify-content: center;
  flex-shrink: 0;
}

.w-88 { width: 88px; }
.w-102 { width: 102px; }
.w-108 { width: 108px; }

.tint-green { background: #edf7f4; color: #5ab99c; }
.tint-red { background: #fbedeb; color: #d95745; }
.tint-navy { background: #eaecee; color: #323f50; }
.tint-orange { background: #fdf5ec; color: #e69d3a; }

.sz-dollar { width: 25px; height: 40px; }
.sz-card { width: 45px; height: 40px; }
.sz-round { width: 40px; height: 40px; }

.stat-title {
  font-size: 32px;
  line-height: 38px;
  font-weight: 600;
  letter-spacing: 0.15px;
}

.stat-value {
  font-size: 48px;
  line-height: 58px;
  font-weight: 700;
}

.stat-sub {
  margin-top: 3px;
  color: #5f6469;
}

.c-green { color: #5ab99c; }
.c-red { color: #d95745; }
.c-navy { color: #323f50; }
.c-orange { color: #e69d3a; }
.c-blue { color: #5097d8; }

.quick {
  margin-top: 82px;
}

.card-head {
  display: flex;
  align-items: center;
  gap: 16px;
  padding: 16px 32px;
  font-size: 40px;
  line-height: 48px;
  font-weight: 600;
  letter-spacing: 0.25px;
  border-bottom: 2px solid #d2d4d6;
}

.head-rocket { width: 40px; height: 40px; }
.head-cap { width: 50px; height: 40px; }
.head-bulb { width: 30px; height: 40px; }

.actions {
  display: grid;
  grid-template-columns: repeat(4, 1fr);
  gap: 32px;
  padding: 32px;
}

.action {
  height: 237px;
  border: 2px solid;
  border-radius: 8px;
  display: flex;
  flex-direction: column;
  align-items: center;
  padding-top: 32px;
}

.b-navy { border-color: #323f50; }
.b-red { border-color: #d95745; }
.b-green { border-color: #5ab99c; }
.b-blue { border-color: #5097d8; }

.act-round { width: 64px; height: 64px; }
.act-calc { width: 48px; height: 64px; }

.action-title {
  margin-top: 21px;
  font-size: 32px;
  line-height: 38px;
  font-weight: 600;
}

.action-sub {
  margin-top: 5px;
  color: #5f6469;
}

.lower {
  display: grid;
  grid-template-columns: 1fr 1104px;
  gap: 48px;
  align-items: start;
  margin-top: 48px;
}

.started-body {
  padding: 34px 32px 32px;
}

.intro {
  font-size: 32px;
  line-height: 48px;
  color: #5f6469;
  margin-bottom: 31px;
}

.step {
  height: 120px;
  display: flex;
  align-items: center;
  gap: 32px;
  border-bottom: 2px solid #dfe3e7;
}

.step:last-child {
  height: 118px;
  border-bottom: 0;
}

.step-icon {
  width: 53px;
  height: 56px;
  border-radius: 50%;
  background: #eceff0;
  color: #7f8a8a;
  display: flex;
  align-items: center;
  justify-content: center;
  flex-shrink: 0;
}

.step-icon.narrow {
  width: 50px;
}

.step-icon.done {
  background: #5ab99c;
  color: #fff;
}

.sz-check { width: 21px; height: 24px; }
.sz-user { width: 21px; height: 24px; }
.sz-calc { width: 18px; height: 24px; }

.step-text {
  flex: 1;
}

.step-title {
  font-size: 32px;
  line-height: 38px;
  font-weight: 600;
}

.step-sub {
  margin-top: 4px;
  color: #5f6469;
}

.btn {
  border: 2px solid #323f50;
  border-radius: 9px;
  padding: 7px 16px;
  line-height: 43px;
  color: #323f50;
}

.tips-body {
  padding: 33px 32px 30px;
}

.tip {
  padding-bottom: 30px;
  margin-bottom: 32px;
  border-bottom: 2px solid #c8c9cb;
}

.tip.last {
  padding-bottom: 0;
  margin-bottom: 0;
  border-bottom: 0;
}

.tip h3 {
  display: flex;
  align-items: center;
  gap: 10px;
  font-size: 32px;
  line-height: 38px;
  font-weight: 600;
  margin-bottom: 18px;
}

.emoji {
  width: 40px;
  height: 37px;
  flex-shrink: 0;
}

.tip p {
  color: #5f6469;
}

.links {
  list-style: none;
  color: #5ab99c;
}
```
